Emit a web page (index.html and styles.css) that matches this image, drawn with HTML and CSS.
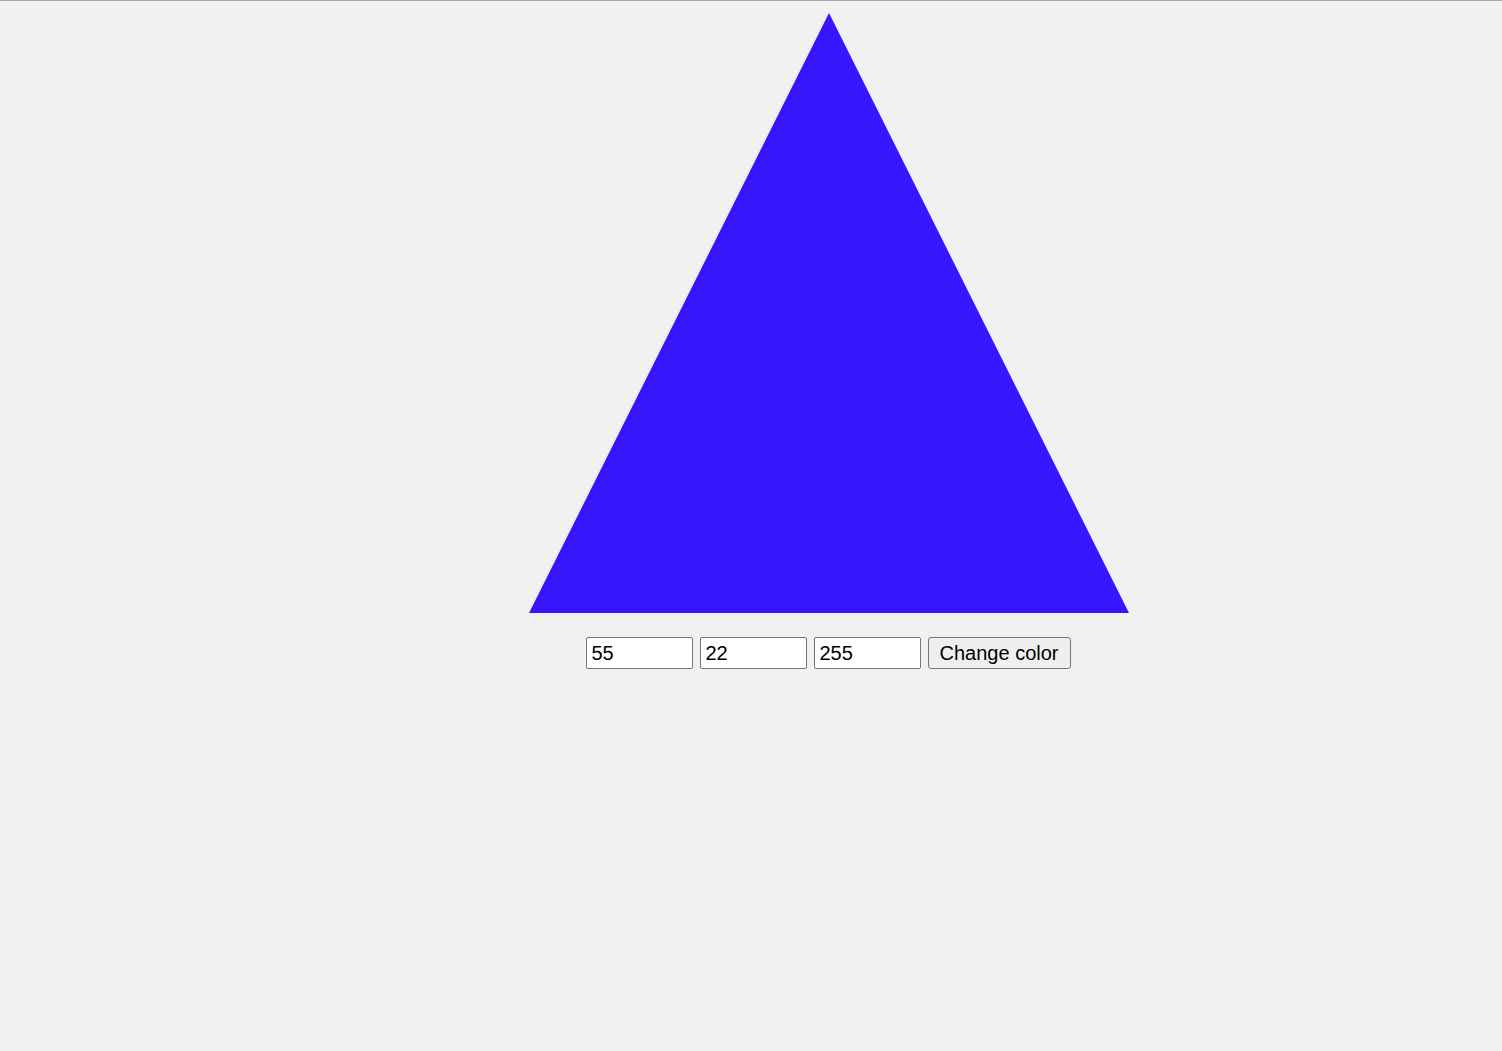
FILE: index.html
```html
<!DOCTYPE html>
<html>
<head>
<meta charset="utf-8">
<link rel="stylesheet" href="styles.css">
</head>
<body>
<div class="topline"></div>
<main class="stage">
  <svg class="tri" width="600" height="600" viewBox="0 0 600 600">
    <polygon points="300,0 600,600 0,600" fill="#3716ff"/>
  </svg>
  <div class="controls">
    <input class="field" type="text" value="55">
    <input class="field" type="text" value="22">
    <input class="field" type="text" value="255">
    <button class="btn">Change color</button>
  </div>
</main>
</body>
</html>
```
FILE: styles.css
```css
html, body {
  margin: 0;
  padding: 0;
  background: #f1f1f1;
  font-family: "Liberation Sans", Arial, sans-serif;
}
.topline {
  height: 1px;
  background: #a9a9a9;
}
.stage {
  display: flex;
  flex-direction: column;
  align-items: center;
  padding-left: 156px;
  padding-top: 12px;
}
.tri {
  display: block;
}
.controls {
  display: flex;
  gap: 7px;
  margin-top: 24px;
  margin-right: 2px;
}
.field {
  box-sizing: border-box;
  width: 107px;
  height: 32px;
  border: 1px solid #767676;
  border-radius: 2px;
  background: #fff;
  padding: 1px 5px 0;
  font-family: "Liberation Sans", Arial, sans-serif;
  font-size: 20px;
  color: #000;
  margin: 0;
}
.btn {
  box-sizing: border-box;
  width: 143px;
  height: 32px;
  border: 1px solid #767676;
  border-radius: 3px;
  background: #efefef;
  font-family: "Liberation Sans", Arial, sans-serif;
  font-size: 20px;
  color: #000;
  padding: 0 6px;
  margin: 0;
}
```
